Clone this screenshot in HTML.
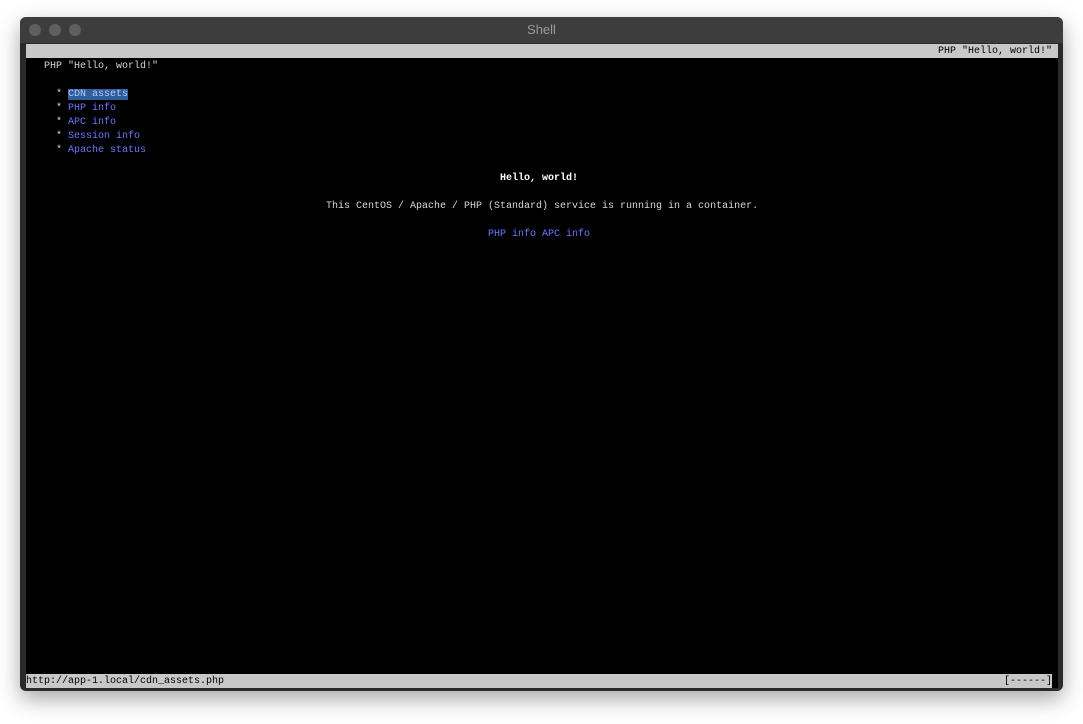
<!DOCTYPE html>
<html><head><style>
body{margin:0;width:1083px;height:724px;background:#fff;position:relative;overflow:hidden;font-family:"Liberation Mono",monospace;}
.win{position:absolute;left:20px;top:17px;width:1043px;height:674px;background:#2a2a2a;border-radius:6px;box-shadow:0 8px 22px rgba(0,0,0,.35);overflow:hidden;}
.tb{position:absolute;left:0;top:0;width:100%;height:26px;background:#3d3d3d;color:#9a9a9a;font-family:"Liberation Sans",sans-serif;font-size:13px;text-align:center;line-height:26px;}
.dot{position:absolute;top:7px;width:12px;height:12px;border-radius:50%;background:#5f5f5f;}
.term{position:absolute;left:6px;top:27px;width:1032px;height:644px;background:#000;}
.row{position:absolute;left:0;height:14px;line-height:18px;font-size:10px;color:#d8d8d8;white-space:pre;}
.bar{background:#c8c8c8;color:#000;width:1032px;}
.l{color:#6d78ff;}
.sel{background:#2f5f9a;color:#b8c6ff;}
.c{width:1026px;text-align:center;}
</style></head><body>
<div class="win">
<div class="tb">Shell</div>
<div class="dot" style="left:9px"></div><div class="dot" style="left:29px"></div><div class="dot" style="left:49px"></div>
<div class="term">
<div class="row bar" style="top:0;text-align:right;width:1026px;padding-right:6px;line-height:16px">PHP "Hello, world!"</div>
<div class="row" style="top:14px;left:18px">PHP "Hello, world!"</div>
<div class="row" style="top:42px;left:30px">* <span class="sel">CDN assets</span></div>
<div class="row" style="top:56px;left:30px">* <span class="l">PHP info</span></div>
<div class="row" style="top:70px;left:30px">* <span class="l">APC info</span></div>
<div class="row" style="top:84px;left:30px">* <span class="l">Session info</span></div>
<div class="row" style="top:98px;left:30px">* <span class="l">Apache status</span></div>
<div class="row c" style="top:126px;color:#fff;font-weight:bold">Hello, world!</div>
<div class="row" style="top:154px;left:300px">This CentOS / Apache / PHP (Standard) service is running in a container.</div>
<div class="row l c" style="top:182px">PHP info APC info</div>
<div class="row bar" style="top:630px;width:1026px;line-height:16px">http://app-1.local/cdn_assets.php</div>
<div class="row" style="top:630px;left:978px;color:#000;line-height:16px">[------]</div>
</div>
</div>
</body></html>
